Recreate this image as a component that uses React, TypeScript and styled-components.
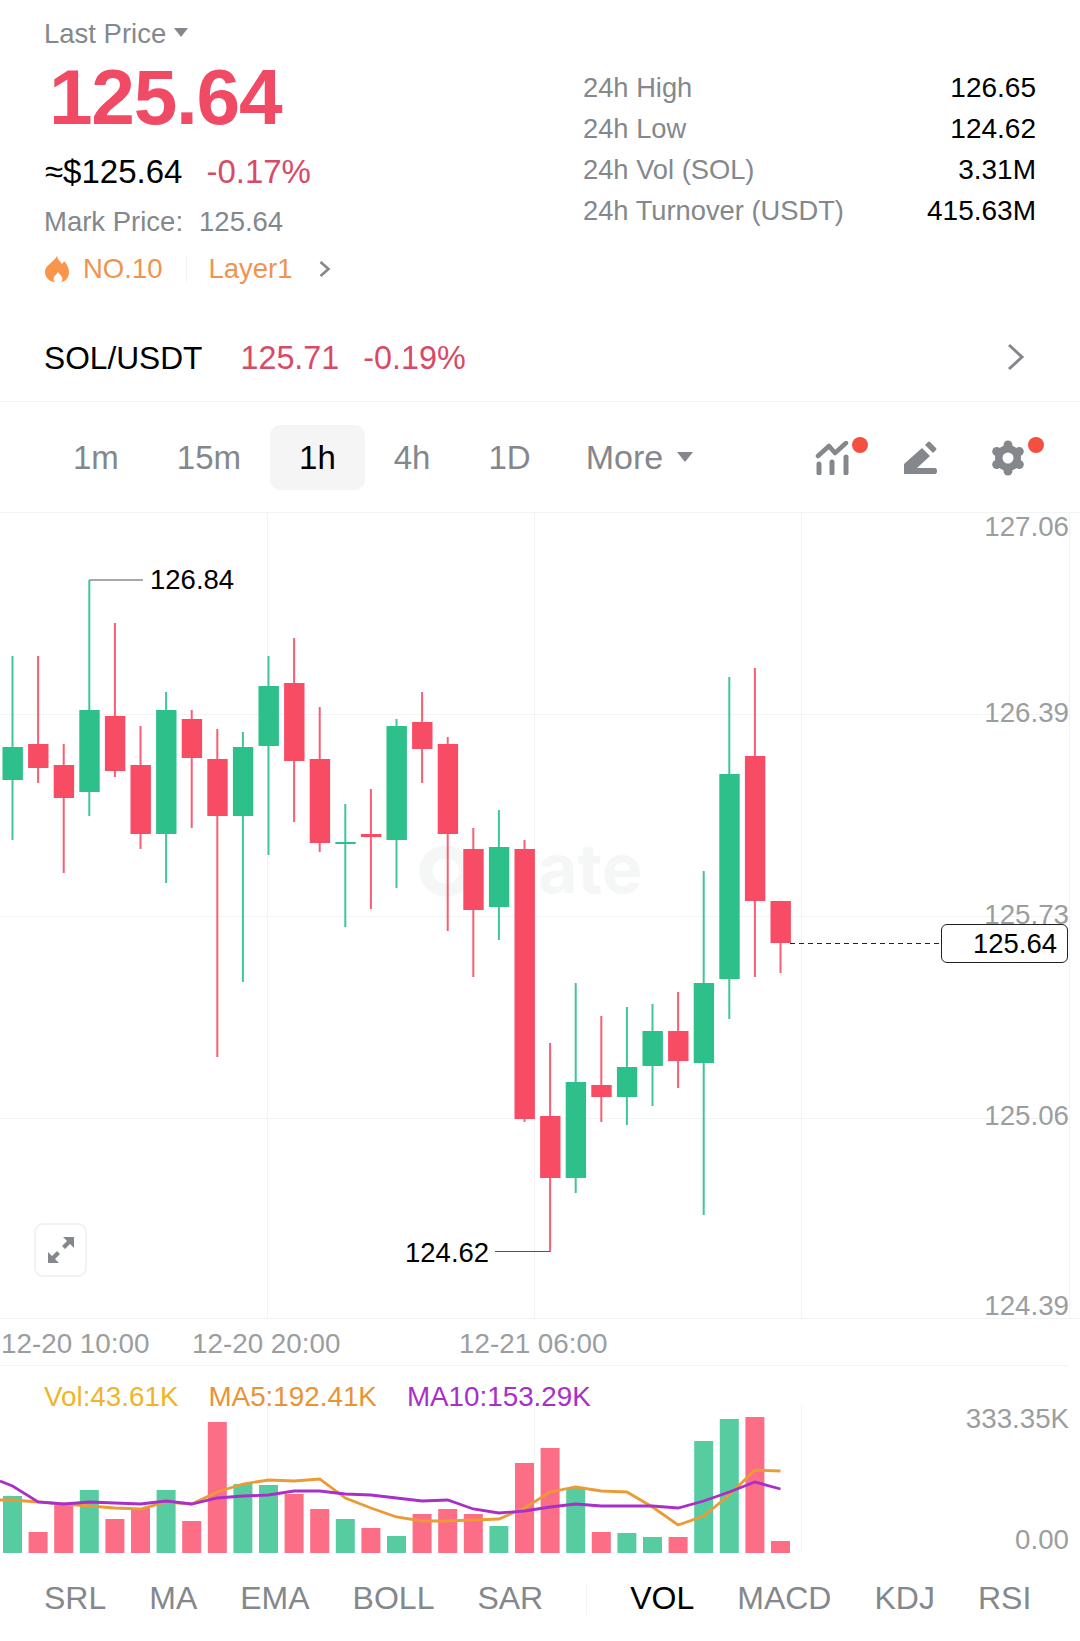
import React from "react";
import styled, { createGlobalStyle } from "styled-components";

const GREEN = "#2dc08a";
const RED = "#f84c64";
const VOL_GREEN = "#57cca1";
const VOL_RED = "#fb6e85";
const STEP = 25.6;
const xAt = (i: number) => 12.5 + STEP * i;

// wick top, wick bottom, body top, body bottom (page px), up = green
const candles: [number, number, number, number, boolean][] = [
  [656, 840, 747, 780, true],
  [656, 783, 744, 768, false],
  [744, 873, 765, 798, false],
  [580, 816, 710, 792, true],
  [623, 777, 716, 771, false],
  [726, 849, 765, 834, false],
  [692, 883, 710, 834, true],
  [710, 828, 719, 758, false],
  [729, 1057, 759, 816, false],
  [732, 982, 747, 816, true],
  [656, 855, 686, 746, true],
  [638, 822, 683, 761, false],
  [707, 852, 759, 843, false],
  [804, 927, 842, 844, true],
  [789, 909, 834, 837, false],
  [719, 888, 726, 840, true],
  [692, 783, 722, 749, false],
  [737, 931, 744, 834, false],
  [828, 977, 849, 910, false],
  [810, 940, 847, 907, true],
  [840, 1122, 849, 1119, false],
  [1043, 1252, 1116, 1178, false],
  [983, 1193, 1082, 1178, true],
  [1016, 1122, 1085, 1097, false],
  [1007, 1125, 1067, 1097, true],
  [1004, 1106, 1031, 1066, true],
  [992, 1088, 1031, 1061, false],
  [871, 1215, 983, 1063, true],
  [677, 1019, 774, 979, true],
  [668, 977, 756, 901, false],
  [901, 973, 901, 943, false],
];

const volTops = [
  1496, 1532, 1505, 1490, 1519, 1508, 1490, 1521, 1422, 1484, 1485, 1494, 1509, 1519, 1528, 1536, 1514, 1509, 1514,
  1526, 1463, 1448, 1488, 1532, 1533, 1537, 1537, 1441, 1419, 1417, 1541,
];

const ma5 = [
  1500, 1500, 1502, 1504, 1506, 1508, 1509, 1502, 1504, 1492, 1484, 1480, 1481, 1479, 1498, 1508, 1517, 1521, 1521,
  1520, 1519, 1508, 1492, 1487, 1491, 1492, 1507, 1525, 1516, 1495, 1470, 1471,
];
const ma10 = [
  1481, 1486, 1502, 1504, 1502, 1503, 1504, 1501, 1504, 1498, 1496, 1495, 1491, 1491, 1494, 1495, 1498, 1501, 1500,
  1509, 1513, 1511, 1507, 1504, 1506, 1506, 1506, 1508, 1501, 1492, 1482, 1489,
];

const linePoints = (data: number[]) =>
  data.map((y, k) => `${k === 0 ? 0 : xAt(k - 1)},${y}`).join(" ");

const GlobalStyle = createGlobalStyle`
  html, body {
    margin: 0;
    padding: 0;
    background: #fff;
  }
  body {
    font-family: "Liberation Sans", Arial, sans-serif;
    color: #000;
  }
`;

const App = () => (
  <Page>
    <GlobalStyle />
    <Summary>
      <PriceColumn>
        <LastPriceLabel>
          Last Price <Caret />
        </LastPriceLabel>
        <BigPrice>125.64</BigPrice>
        <FiatRow>
          <span>≈$125.64</span>
          <Change>-0.17%</Change>
        </FiatRow>
        <MarkRow>
          <span>Mark Price:</span>
          <span>125.64</span>
        </MarkRow>
        <TagRow>
          <svg width="26" height="28" viewBox="0 0 26 28">
            <path
              fill="#f9964b"
              d="M13 1c1 4 3 5 5 8 1-1 1.500-2 2-3 3 3 5 7 5 11 0 6-4 10-8 10 1-1 2-3 1-5-1-2-3-3-4-5-1 2-3 3-4 5-1 2 0 4 1 5-5 0-10-4-10-10 0-7 8-9 12-16z"
            />
          </svg>
          <TagText>NO.10</TagText>
          <TagDivider />
          <TagText>Layer1</TagText>
          <svg width="14" height="20" viewBox="0 0 14 20">
            <path d="M2.500 3l8 7-8 7" fill="none" stroke="#84888c" strokeWidth="2.600" />
          </svg>
        </TagRow>
      </PriceColumn>
      <StatsTable>
        <StatRow>
          <StatLabel>24h High</StatLabel>
          <StatValue>126.65</StatValue>
        </StatRow>
        <StatRow>
          <StatLabel>24h Low</StatLabel>
          <StatValue>124.62</StatValue>
        </StatRow>
        <StatRow>
          <StatLabel>24h Vol (SOL)</StatLabel>
          <StatValue>3.31M</StatValue>
        </StatRow>
        <StatRow>
          <StatLabel>24h Turnover (USDT)</StatLabel>
          <StatValue>415.63M</StatValue>
        </StatRow>
      </StatsTable>
    </Summary>

    <PairRow>
      <PairName>SOL/USDT</PairName>
      <PairPrice>125.71</PairPrice>
      <PairChange>-0.19%</PairChange>
      <PairChevron width="20" height="30" viewBox="0 0 20 30">
        <path d="M3 3l13 12L3 27" fill="none" stroke="#84888c" strokeWidth="3" />
      </PairChevron>
    </PairRow>

    <Toolbar>
      <IntervalTab>1m</IntervalTab>
      <IntervalTab>15m</IntervalTab>
      <IntervalTab $active>1h</IntervalTab>
      <IntervalTab>4h</IntervalTab>
      <IntervalTab>1D</IntervalTab>
      <MoreTab>
        More <MoreCaret />
      </MoreTab>
      <ToolIcons>
        <ToolIcon $dot>
          <svg width="34" height="34" viewBox="0 0 34 34">
            <path d="M3 15L14 5l6 7L31 2" fill="none" stroke="#84888c" strokeWidth="4.500" strokeLinecap="round" strokeLinejoin="round" />
            <path d="M4 23v9M17 21v11M31 16v16" fill="none" stroke="#84888c" strokeWidth="5" strokeLinecap="round" />
          </svg>
        </ToolIcon>
        <ToolIcon>
          <svg width="34" height="34" viewBox="0 0 34 34">
            <path fill="#84888c" d="M1 33V23L19 7l8 8-13 12h18q2 0 2 3t-2 3z" />
            <path fill="#84888c" d="M22 4l3-3q1-1 2 0l6 6q1 1 0 2l-3 3z" />
          </svg>
        </ToolIcon>
        <ToolIcon $dot>
          <svg width="34" height="36" viewBox="0 0 34 36">
            <circle cx="17" cy="18" r="13" fill="#84888c" />
            {[0, 60, 120, 180, 240, 300].map((a) => (
              <circle
                key={a}
                cx={17 + 13 * Math.sin((a * Math.PI) / 180)}
                cy={18 - 13 * Math.cos((a * Math.PI) / 180)}
                r="4.500"
                fill="#84888c"
              />
            ))}
            <circle cx="17" cy="18" r="5.500" fill="#fff" />
          </svg>
        </ToolIcon>
      </ToolIcons>
    </Toolbar>

    <ChartArea>
      <ChartCanvas viewBox="0 513 1080 806" width="1080" height="806">
        {[714.5, 916.5, 1118.5].map((y) => (
          <line key={y} x1="0" x2="1070" y1={y} y2={y} stroke="#f2f3f3" />
        ))}
        {[267.5, 534.5, 801.5, 1069.5].map((x) => (
          <line key={x} x1={x} x2={x} y1="513" y2="1319" stroke="#f2f3f3" />
        ))}
        <ellipse cx="446" cy="871" rx="20" ry="19" fill="none" stroke="#f5f6f6" strokeWidth="13" />
        <text x="538" y="893" fontSize="68" fontWeight="700" fill="#f5f6f6" fontFamily="Inter, sans-serif">
          ate
        </text>
        {candles.map(([wt, wb, bt, bb, up], i) => (
          <g key={i} fill={up ? GREEN : RED}>
            <rect x={xAt(i) - 1} y={wt} width="2" height={wb - wt} opacity="0.9" />
            <rect x={xAt(i) - 10} y={bt} width="20.400" height={bb - bt} />
          </g>
        ))}
        <path d="M89.500 580H143" fill="none" stroke="#4a5a55" strokeWidth="1.200" />
        <path d="M495 1251.500H550" fill="none" stroke="#555" strokeWidth="1.200" />
        <line x1="790" x2="941" y1="943.500" y2="943.500" stroke="#222" strokeDasharray="5 4" />
      </ChartCanvas>
      <ChartPrice $top={-3}>127.06</ChartPrice>
      <ChartPrice $top={183}>126.39</ChartPrice>
      <ChartPrice $top={385}>125.73</ChartPrice>
      <ChartPrice $top={586}>125.06</ChartPrice>
      <ChartPrice $top={776}>124.39</ChartPrice>
      <Extreme $left={150} $top={51}>126.84</Extreme>
      <Extreme $left={405} $top={724}>124.62</Extreme>
      <LastBox>125.64</LastBox>
      <ExpandButton>
        <svg width="28" height="28" viewBox="0 0 28 28">
          <path fill="#84888c" d="M16 1h11v11l-4-4-5 5-3-3 5-5zM12 27H1V16l4 4 5-5 3 3-5 5z" />
        </svg>
      </ExpandButton>
    </ChartArea>

    <TimeAxis>
      <TimeLabel $gap={1}>12-20 10:00</TimeLabel>
      <TimeLabel $gap={43}>12-20 20:00</TimeLabel>
      <TimeLabel $gap={119}>12-21 06:00</TimeLabel>
    </TimeAxis>

    <VolumePanel>
      <VolumeCanvas viewBox="0 1366 1080 189" width="1080" height="189">
        {[267.5, 534.5, 801.5].map((x) => (
          <line key={x} x1={x} x2={x} y1="1405" y2="1553" stroke="#f2f3f3" />
        ))}
        {volTops.map((top, i) => (
          <rect
            key={i}
            x={xAt(i) - 9.500}
            y={top}
            width="19"
            height={1553 - top}
            fill={candles[i][4] ? VOL_GREEN : VOL_RED}
          />
        ))}
        <polyline points={linePoints(ma5)} fill="none" stroke="#ec9a36" strokeWidth="2.800" />
        <polyline points={linePoints(ma10)} fill="none" stroke="#a92fc9" strokeWidth="2.800" />
      </VolumeCanvas>
      <Legend>
        <LegendItem $color="#f0b429">Vol:43.61K</LegendItem>
        <LegendItem $color="#ea9334">MA5:192.41K</LegendItem>
        <LegendItem $color="#a92fc9">MA10:153.29K</LegendItem>
      </Legend>
      <VolumeAxis>
        <AxisLabel>333.35K</AxisLabel>
        <AxisLabel>0.00</AxisLabel>
      </VolumeAxis>
    </VolumePanel>

    <IndicatorBar>
      <IndicatorTab>SRL</IndicatorTab>
      <IndicatorTab>MA</IndicatorTab>
      <IndicatorTab>EMA</IndicatorTab>
      <IndicatorTab>BOLL</IndicatorTab>
      <IndicatorTab>SAR</IndicatorTab>
      <IndicatorDivider />
      <IndicatorTab $active>VOL</IndicatorTab>
      <IndicatorTab>MACD</IndicatorTab>
      <IndicatorTab>KDJ</IndicatorTab>
      <IndicatorTab>RSI</IndicatorTab>
    </IndicatorBar>
  </Page>
);

const Page = styled.div`
  width: 1080px;
  height: 1641px;
  overflow: hidden;
  background: #fff;
`;

const Summary = styled.div`
  display: flex;
  height: 315px;
  padding: 17px 44px 0;
  box-sizing: border-box;
`;

const PriceColumn = styled.div`
  width: 539px;
  display: flex;
  flex-direction: column;
`;

const LastPriceLabel = styled.div`
  display: flex;
  align-items: center;
  gap: 8px;
  font-size: 27.500px;
  line-height: 34px;
  color: #84888c;
`;

const Caret = styled.i`
  width: 0;
  height: 0;
  border-left: 7px solid transparent;
  border-right: 7px solid transparent;
  border-top: 9px solid #84888c;
  margin-bottom: 4px;
`;

const BigPrice = styled.div`
  margin: 1px 0 0 5px;
  font-size: 78.500px;
  font-weight: 700;
  line-height: 90px;
  letter-spacing: -1.300px;
  color: #f04a64;
`;

const FiatRow = styled.div`
  display: flex;
  gap: 24px;
  margin: 10px 0 0 1px;
  font-size: 33px;
  line-height: 40px;
`;

const Change = styled.span`
  color: #d94a66;
`;

const MarkRow = styled.div`
  display: flex;
  gap: 16px;
  margin-top: 13px;
  font-size: 27.500px;
  line-height: 34px;
  color: #84888c;
`;

const TagRow = styled.div`
  display: flex;
  align-items: center;
  margin-top: 13px;
  height: 34px;
  svg:first-child {
    margin-right: 13px;
  }
`;

const TagText = styled.span`
  font-size: 27.500px;
  color: #f1934f;
  & + svg {
    margin-left: 25px;
  }
`;

const TagDivider = styled.i`
  width: 1px;
  height: 26px;
  margin: 0 21px 0 24px;
  background: #f2f2f2;
`;

const StatsTable = styled.div`
  width: 453px;
  margin-top: 50px;
  display: flex;
  flex-direction: column;
`;

const StatRow = styled.div`
  display: flex;
  justify-content: space-between;
  align-items: center;
  height: 41px;
`;

const StatLabel = styled.span`
  font-size: 27.300px;
  color: #84888c;
`;

const StatValue = styled.span`
  font-size: 28px;
  color: #000;
`;

const PairRow = styled.div`
  display: flex;
  align-items: center;
  height: 87px;
  padding: 0 44px;
  box-sizing: border-box;
  border-bottom: 1px solid #f2f3f3;
  font-size: 32.300px;
`;

const PairName = styled.span`
  font-size: 31.700px;
  color: #000;
`;

const PairPrice = styled.span`
  margin-left: 38px;
  color: #d94a66;
`;

const PairChange = styled.span`
  margin-left: 24px;
  color: #d94a66;
`;

const PairChevron = styled.svg`
  margin-left: auto;
  margin-right: 10px;
  margin-bottom: 2px;
`;

const Toolbar = styled.div`
  display: flex;
  align-items: center;
  height: 111px;
  padding: 0 55px 0 44px;
  box-sizing: border-box;
  border-bottom: 1px solid #f2f3f3;
`;

const IntervalTab = styled.div<{ $active?: boolean }>`
  padding: 2px 29px 0;
  height: 65px;
  box-sizing: border-box;
  display: flex;
  align-items: center;
  border-radius: 10px;
  font-size: 33px;
  color: ${(p) => (p.$active ? "#000" : "#84888c")};
  background: ${(p) => (p.$active ? "#f5f5f5" : "transparent")};
`;

const MoreTab = styled(IntervalTab)`
  gap: 14px;
  padding: 0 29px 0 26px;
  font-size: 34px;
`;

const MoreCaret = styled(Caret)`
  border-left-width: 8px;
  border-right-width: 8px;
  border-top-width: 10px;
  margin-bottom: 0;
`;

const ToolIcons = styled.div`
  display: flex;
  align-items: center;
  margin: 2px 0 0 auto;
  gap: 54px;
`;

const ToolIcon = styled.div<{ $dot?: boolean }>`
  position: relative;
  width: 34px;
  height: 36px;
  display: flex;
  align-items: center;
  &::after {
    content: "";
    display: ${(p) => (p.$dot ? "block" : "none")};
    position: absolute;
    right: -19px;
    top: -3px;
    width: 16px;
    height: 16px;
    border-radius: 50%;
    background: #f4503f;
  }
`;

const ChartArea = styled.div`
  position: relative;
  height: 806px;
  border-bottom: 1px solid #f2f3f3;
  box-sizing: border-box;
`;

const ChartCanvas = styled.svg`
  display: block;
`;

const AxisLabel = styled.span`
  font-size: 27.700px;
  line-height: 34px;
  color: #9b9ea0;
`;

const ChartPrice = styled(AxisLabel)<{ $top: number }>`
  position: absolute;
  right: 11px;
  top: ${(p) => p.$top}px;
`;

const Extreme = styled.span<{ $left: number; $top: number }>`
  position: absolute;
  left: ${(p) => p.$left}px;
  top: ${(p) => p.$top}px;
  font-size: 27.500px;
  line-height: 32px;
  color: #000;
`;

const LastBox = styled.div`
  position: absolute;
  left: 941px;
  top: 411px;
  width: 127px;
  height: 39px;
  box-sizing: border-box;
  border: 1px solid #222;
  border-radius: 6px;
  background: #fff;
  padding-right: 10px;
  text-align: right;
  font-size: 27.500px;
  line-height: 37px;
  color: #000;
`;

const ExpandButton = styled.div`
  position: absolute;
  left: 34px;
  top: 710px;
  width: 53px;
  height: 54px;
  box-sizing: border-box;
  border: 2px solid #f2f2f2;
  border-radius: 9px;
  display: flex;
  align-items: center;
  justify-content: center;
  background: #fff;
`;

const TimeAxis = styled.div`
  display: flex;
  height: 47px;
  padding-top: 3px;
  box-sizing: border-box;
  align-items: center;
  border-bottom: 1px solid #f2f3f3;
  margin-right: 12px;
`;

const TimeLabel = styled.span<{ $gap: number }>`
  margin-left: ${(p) => p.$gap}px;
  width: 148px;
  white-space: nowrap;
  text-align: center;
  font-size: 27.800px;
  color: #9b9ea0;
`;

const VolumePanel = styled.div`
  position: relative;
  height: 189px;
`;

const VolumeCanvas = styled.svg`
  display: block;
`;

const Legend = styled.div`
  position: absolute;
  left: 44px;
  top: 14px;
  display: flex;
  gap: 30px;
`;

const LegendItem = styled.span<{ $color: string }>`
  font-size: 27.800px;
  line-height: 34px;
  color: ${(p) => p.$color};
`;

const VolumeAxis = styled.div`
  position: absolute;
  right: 11px;
  top: 36px;
  height: 155px;
  display: flex;
  flex-direction: column;
  justify-content: space-between;
  align-items: flex-end;
`;

const IndicatorBar = styled.div`
  display: flex;
  align-items: center;
  gap: 43px;
  width: 1030px;
  height: 85px;
  padding: 2px 0 0 44px;
  box-sizing: border-box;
  overflow: hidden;
`;

const IndicatorTab = styled.span<{ $active?: boolean }>`
  flex: none;
  font-size: 32px;
  color: ${(p) => (p.$active ? "#000" : "#84888c")};
`;

const IndicatorDivider = styled.i`
  flex: none;
  width: 1px;
  height: 32px;
  background: #f2f3f3;
`;

export default App;
